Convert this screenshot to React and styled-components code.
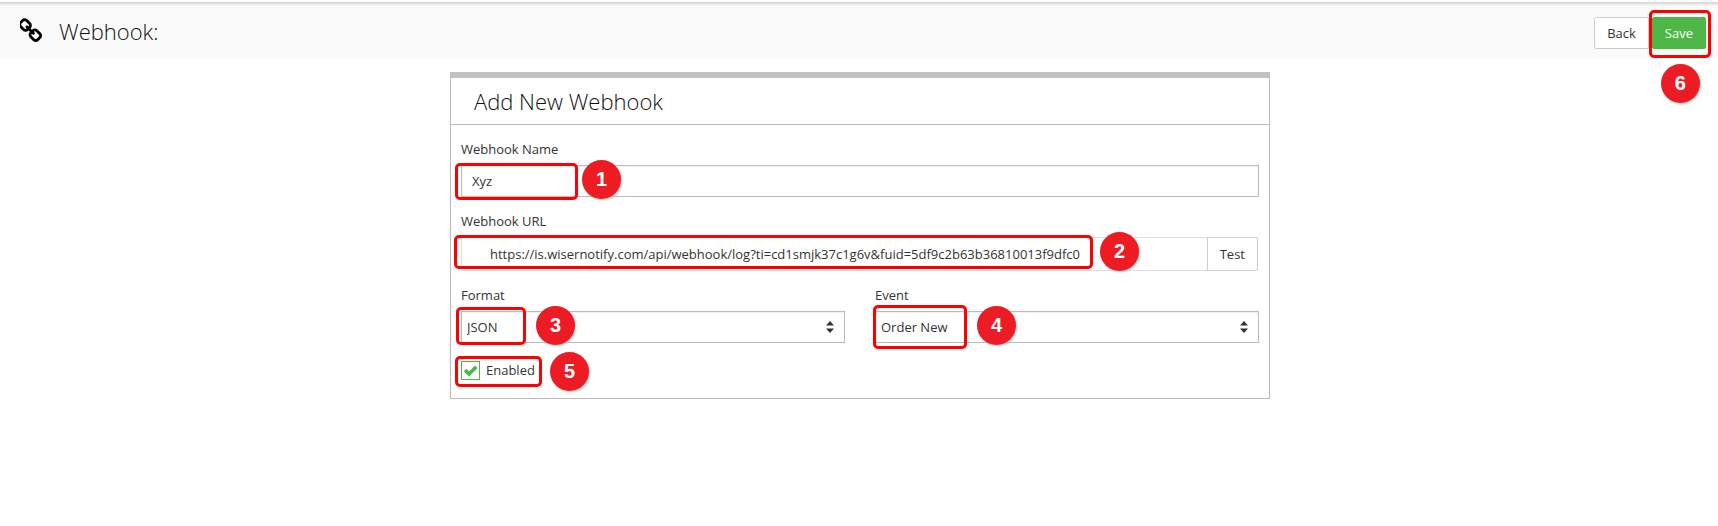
import React, { useState } from "react";
import styled, { createGlobalStyle } from "styled-components";

const GlobalStyle = createGlobalStyle`
* {
  box-sizing: border-box;
}
body {
  margin: 0;
  background: #fff;
}
body, input, select, button {
  font-family: 'Open Sans', 'Noto Sans', sans-serif;
  font-size: 13px;
  color: #333;
}
`;

const Header = styled.header`
display: flex;
align-items: center;
justify-content: space-between;
height: 57px;
margin-top: 2px;
padding: 5px 12px 0 20px;
background: linear-gradient(#d2d2d2, #fafafa 4px);
`;

const PageTitle = styled.h1`
display: flex;
align-items: center;
gap: 13px;
margin: 0;
padding-bottom: 4px;
font-size: 22px;
font-weight: 300;
line-height: 32px;
color: #111;
`;

const Actions = styled.div`
display: flex;
gap: 3px;
`;

const Button = styled.button`
height: 32px;
padding: 0 12px;
color: ${props => (props.$primary ? '#fff' : '#333')};
background: ${props => (props.$primary ? '#4db848' : '#fff')};
border: 1px solid ${props => (props.$primary ? '#4db848' : '#ccc')};
border-radius: 2px;
cursor: pointer;
`;

const TestButton = styled(Button)`
height: 34px;
margin-left: -1px;
border-radius: 0 2px 2px 0;
`;

const Main = styled.main`
padding: 13px 0 0 2px;
`;

const Panel = styled.section`
max-width: 820px;
margin: 0 auto;
border: 1px solid #bbb;
border-top: 6px solid #c2c2c2;
`;

const PanelTitle = styled.h2`
margin: 0;
padding: 8px 23px;
border-bottom: 1px solid #bbb;
font-size: 22px;
font-weight: 300;
line-height: 30px;
color: #111;
`;

const Form = styled.form`
display: flex;
flex-direction: column;
gap: 14px;
padding: 14px 10px;
`;

const Columns = styled.div`
display: grid;
grid-template-columns: 1fr 1fr;
gap: 30px;
`;

const Label = styled.label`
display: block;
margin-bottom: 6px;
line-height: 20px;
`;

const Marked = styled.div`
position: relative;
display: flex;
`;

const UrlRow = styled(Marked)`
padding-right: 1px;
`;

const Input = styled.input`
flex: 1;
min-width: 0;
height: 32px;
padding: 0 10px;
background: #fff;
border: 1px solid #bbb;
border-radius: 0;
box-shadow: inset 0 1px 2px #eee;
outline: none;
`;

const UrlInput = styled(Input)`
height: 34px;
padding: 0 28px;
border-color: #ddd;
box-shadow: none;
`;

const Select = styled.select`
flex: 1;
height: 32px;
padding: 0 30px 0 5px;
appearance: none;
background: #fff;
border: 1px solid #bbb;
border-radius: 0;
box-shadow: inset 0 1px 2px #eee;
outline: none;
`;

const Arrows = styled.svg`
position: absolute;
right: 11px;
top: 10px;
pointer-events: none;
`;

const CheckRow = styled(Marked)`
align-items: center;
gap: 6px;
height: 27px;
`;

const CheckLabel = styled.label`
padding-bottom: 1px;
line-height: 20px;
`;

const Checkbox = styled.input`
width: 19px;
height: 19px;
margin: 0;
appearance: none;
background: #fff;
border: 1px solid #4db848;
`;

const Tick = styled.svg`
position: absolute;
left: 3px;
top: 7px;
pointer-events: none;
`;

// red frame drawn over a control, offsets are from the control's corner
const Frame = styled.span`
position: absolute;
left: ${props => props.$x}px;
top: ${props => props.$y}px;
width: ${props => props.$w}px;
height: ${props => props.$h}px;
border: 3px solid #f00;
border-radius: 5px;
pointer-events: none;
`;

const Badge = styled.span`
position: absolute;
left: ${props => props.$x}px;
top: ${props => props.$y}px;
width: 39px;
height: 39px;
border-radius: 50%;
background: #ed1c24;
box-shadow: 1px 1px 2px #ccc;
color: #fff;
font: bold 20px/38px 'Liberation Sans', Arial, sans-serif;
text-align: center;
pointer-events: none;
`;

const ChainIcon = () => (
  <svg width="26" height="26" viewBox="128 0 1792 1792" fill="#000" aria-hidden="true">
    <path d="M1456 1216q0-40-28-68l-208-208q-28-28-68-28-42 0-72 32 3 3 19 18.500t21.500 21.500 15 19 13 25.500 3.500 27.500q0 40-28 68t-68 28q-15 0-27.500-3.500t-25.500-13-19-15-21.500-21.500-18.500-19q-33 31-33 73 0 40 28 68l206 207q27 27 68 27 40 0 68-26l147-146q28-28 28-67zm-703-705q0-40-28-68l-206-207q-28-28-68-28-39 0-68 27l-147 146q-28 28-28 67 0 40 28 68l208 208q27 27 68 27 42 0 72-31-3-3-19-18.500t-21.500-21.500-15-19-13-25.500-3.500-27.500q0-40 28-68t68-28q15 0 27.500 3.500t25.500 13 19 15 21.500 21.500 18.500 19q33-31 33-73zm895 705q0 120-85 203l-147 146q-83 83-203 83-121 0-204-85l-206-207q-83-83-83-203 0-123 88-209l-88-88q-86 88-208 88-120 0-204-84l-208-208q-84-84-84-204t85-203l147-146q83-83 203-83 121 0 204 85l206 207q83 83 83 203 0 123-88 209l88 88q86-88 208-88 120 0 204 84l208 208q84 84 84 204z" />
  </svg>
);

const SortArrows = () => (
  <Arrows width="8" height="12" viewBox="0 0 8 12" fill="#333" aria-hidden="true">
    <path d="M0 4.500L4 0l4 4.500zM0 7.500h8L4 12z" />
  </Arrows>
);

const Check = () => (
  <Tick width="13" height="13" viewBox="0 0 13 13" aria-hidden="true">
    <path d="M1 6l4 4L12.300 2.800" fill="none" stroke="#4db848" strokeWidth="3.600" />
  </Tick>
);

export default function App() {
  const [hook, setHook] = useState({
    name: 'Xyz',
    url: 'https://is.wisernotify.com/api/webhook/log?ti=cd1smjk37c1g6v&fuid=5df9c2b63b36810013f9dfc0',
    format: 'JSON',
    event: 'Order New',
    enabled: true
  });

  const handleChange = e => {
    setHook({...hook, [e.target.name]: e.target.value})
  };

  return (
    <>
      <GlobalStyle />
      <Header>
        <PageTitle><ChainIcon />Webhook:</PageTitle>
        <Actions>
          <Button type="button">Back</Button>
          <Marked>
            <Button $primary type="submit" form="webhook">Save</Button>
            <Frame $x={-3} $y={-7} $w={62} $h={48} />
            <Badge $x={9} $y={47}>6</Badge>
          </Marked>
        </Actions>
      </Header>
      <Main>
        <Panel>
          <PanelTitle>Add New Webhook</PanelTitle>
          <Form id="webhook" onSubmit={e => e.preventDefault()}>
            <div>
              <Label htmlFor="name">Webhook Name</Label>
              <Marked>
                <Input id="name" name="name" type="text" value={hook.name} onChange={handleChange} />
                <Frame $x={-6} $y={-2} $w={123} $h={37} />
                <Badge $x={121} $y={-5}>1</Badge>
              </Marked>
            </div>
            <div>
              <Label htmlFor="url">Webhook URL</Label>
              <UrlRow>
                <UrlInput id="url" name="url" type="text" value={hook.url} onChange={handleChange} />
                <TestButton type="button">Test</TestButton>
                <Frame $x={-7} $y={-2} $w={639} $h={34} />
                <Badge $x={639} $y={-5}>2</Badge>
              </UrlRow>
            </div>
            <Columns>
              <div>
                <Label htmlFor="format">Format</Label>
                <Marked>
                  <Select id="format" name="format" value={hook.format} onChange={handleChange}>
                    <option>JSON</option>
                  </Select>
                  <SortArrows />
                  <Frame $x={-5} $y={-4} $w={70} $h={38} />
                  <Badge $x={75} $y={-5}>3</Badge>
                </Marked>
              </div>
              <div>
                <Label htmlFor="event">Event</Label>
                <Marked>
                  <Select id="event" name="event" value={hook.event} onChange={handleChange}>
                    <option>Order New</option>
                  </Select>
                  <SortArrows />
                  <Frame $x={-2} $y={-6} $w={94} $h={44} />
                  <Badge $x={102} $y={-5}>4</Badge>
                </Marked>
              </div>
            </Columns>
            <CheckRow>
              <Checkbox
                id="enabled"
                type="checkbox"
                checked={hook.enabled}
                onChange={e => setHook({...hook, enabled: e.target.checked})}
              />
              {hook.enabled && <Check />}
              <CheckLabel htmlFor="enabled">Enabled</CheckLabel>
              <Frame $x={-6} $y={-1} $w={87} $h={31} />
              <Badge $x={89} $y={-5}>5</Badge>
            </CheckRow>
          </Form>
        </Panel>
      </Main>
    </>
  );
}
